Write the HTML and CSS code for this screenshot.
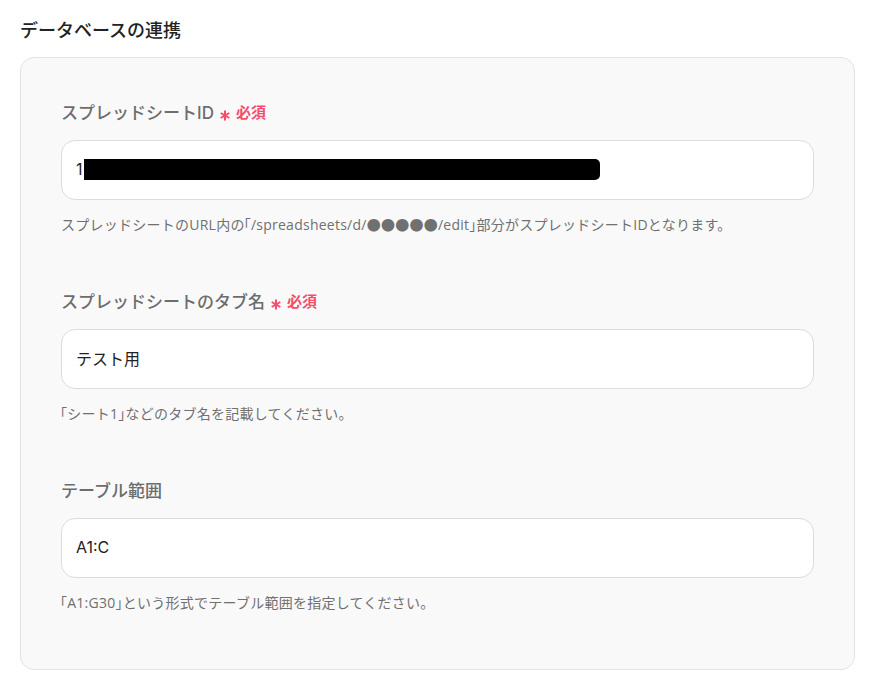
FILE: index.html
```html
<!DOCTYPE html>
<html lang="ja">
<head>
<meta charset="utf-8">
<link rel="stylesheet" href="styles.css">
</head>
<body>
<div class="page">
  <h2 class="title">データベースの連携</h2>
  <div class="card">
    <div class="field">
      <div class="label">スプレッドシートID<span class="req"><svg class="ast" width="10" height="11" viewBox="0 0 10 11"><path d="M5 0.5V10.5M0.7 3L9.3 8M0.7 8L9.3 3" stroke="#f34d6b" stroke-width="2" fill="none"/></svg>必須</span></div>
      <div class="input"><span>1</span><span class="redact"></span></div>
      <div class="help">スプレッドシートのURL内の<span class="bl">「</span>/spreadsheets/d/●●●●●/edit<span class="br">」</span>部分がスプレッドシートIDとなります。</div>
    </div>
    <div class="field">
      <div class="label">スプレッドシートのタブ名<span class="req"><svg class="ast" width="10" height="11" viewBox="0 0 10 11"><path d="M5 0.5V10.5M0.7 3L9.3 8M0.7 8L9.3 3" stroke="#f34d6b" stroke-width="2" fill="none"/></svg>必須</span></div>
      <div class="input">テスト用</div>
      <div class="help"><span class="bl">「</span>シート1<span class="br">」</span>などのタブ名を記載してください。</div>
    </div>
    <div class="field">
      <div class="label">テーブル範囲</div>
      <div class="input">A1:C</div>
      <div class="help"><span class="bl">「</span>A1:G30<span class="br">」</span>という形式でテーブル範囲を指定してください。</div>
    </div>
  </div>
</div>
</body>
</html>
```

FILE: styles.css
```css
* { box-sizing: border-box; }
html, body { margin: 0; padding: 0; background: #fff; }
body {
  font-family: "Inter", "Noto Sans CJK JP", sans-serif;
  color: #222;
}
.page {
  padding: 18px 39px 0 20px;
}
.title {
  margin: 0;
  font-size: 18px;
  font-weight: 500;
  line-height: 26px;
  color: #222;
}
.card {
  margin-top: 13px;
  background: #f9f9f9;
  border: 1px solid #e3e3e3;
  border-radius: 14px;
  padding: 43px 40px 57px 40px;
  display: flex;
  flex-direction: column;
  gap: 56px;
}
.field {
  display: flex;
  flex-direction: column;
}
.label {
  font-size: 17px;
  line-height: 24px;
  height: 24px;
  color: #6d6d6d;
  font-weight: 500;
  display: flex;
  align-items: center;
}
.req {
  margin-left: 6px;
  color: #f34d6b;
  font-size: 15px;
  font-weight: 700;
  display: flex;
  align-items: center;
}
.ast {
  margin-right: 6px;
  position: relative;
  top: 2px;
}
.input {
  margin-top: 15px;
  height: 60px;
  background: #fff;
  border: 1px solid #dcdce0;
  border-radius: 14px;
  padding: 0 14px 2px;
  display: flex;
  align-items: center;
  font-size: 16px;
  color: #222;
}
.redact {
  display: inline-block;
  width: 516px;
  height: 21px;
  background: #000;
  border-radius: 0 5px 5px 0;
  margin-left: 1px;
}
.help {
  margin-top: 14px;
  height: 20px;
  font-family: "Open Sans", "Noto Sans CJK JP", sans-serif;
  font-size: 14px;
  line-height: 20px;
  color: #707070;
  letter-spacing: 0.25px;
  white-space: nowrap;
}
.bl, .br {
  font-family: "Noto Sans CJK JP", sans-serif;
  font-feature-settings: "halt";
}
.bl { margin-left: -1px; }
```
